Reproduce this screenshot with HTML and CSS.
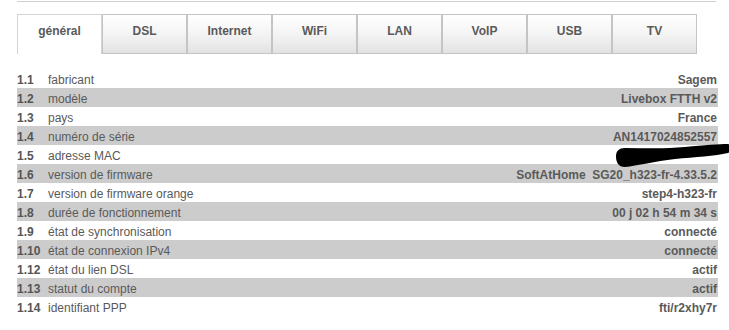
FILE: index.html
```html
<!DOCTYPE html>
<html lang="fr">
<head>
  <meta charset="UTF-8" />
  <title>Livebox - général</title>
  <link rel="stylesheet" href="styles.css">
</head>
<body>

<div class="page">
  <div class="top-line"></div>

  <!-- onglets -->
  <div class="tabs">
    <div class="tab active">général</div>
    <div class="tab">DSL</div>
    <div class="tab">Internet</div>
    <div class="tab">WiFi</div>
    <div class="tab">LAN</div>
    <div class="tab">VoIP</div>
    <div class="tab">USB</div>
    <div class="tab">TV</div>
  </div>

  <!-- infos -->
  <div class="info">
    <div class="row"><span class="num">1.1</span><span class="label">fabricant</span><span class="value">Sagem</span></div>
    <div class="row odd"><span class="num">1.2</span><span class="label">modèle</span><span class="value">Livebox FTTH v2</span></div>
    <div class="row"><span class="num">1.3</span><span class="label">pays</span><span class="value">France</span></div>
    <div class="row odd"><span class="num">1.4</span><span class="label">numéro de série</span><span class="value">AN1417024852557</span></div>
    <div class="row"><span class="num">1.5</span><span class="label">adresse MAC</span>
      <span class="value masked">
        <svg class="blot" width="117" height="24" viewBox="0 0 117 24">
          <path d="M1 12 C1 7, 4 4, 10 4 C30 4, 50 5, 70 3 C90 1, 104 0, 113 0 C117 1, 117 6, 113 9 C100 12, 80 13, 60 15 C40 17, 22 22, 10 23 C3 23, 1 18, 1 12 Z" fill="#000"/>
        </svg>
      </span>
    </div>
    <div class="row odd"><span class="num">1.6</span><span class="label">version de firmware</span><span class="value">SoftAtHome&nbsp; SG20_h323-fr-4.33.5.2</span></div>
    <div class="row"><span class="num">1.7</span><span class="label">version de firmware orange</span><span class="value">step4-h323-fr</span></div>
    <div class="row odd"><span class="num">1.8</span><span class="label">durée de fonctionnement</span><span class="value">00 j 02 h 54 m 34 s</span></div>
    <div class="row"><span class="num">1.9</span><span class="label">état de synchronisation</span><span class="value">connecté</span></div>
    <div class="row odd"><span class="num">1.10</span><span class="label">état de connexion IPv4</span><span class="value">connecté</span></div>
    <div class="row"><span class="num">1.12</span><span class="label">état du lien DSL</span><span class="value">actif</span></div>
    <div class="row odd"><span class="num">1.13</span><span class="label">statut du compte</span><span class="value">actif</span></div>
    <div class="row"><span class="num">1.14</span><span class="label">identifiant PPP</span><span class="value">fti/r2xhy7r</span></div>
  </div>
</div>

</body>
</html>
```

FILE: styles.css
```css
* {
  box-sizing: border-box;
}

html, body {
  margin: 0;
  padding: 0;
  background: #fff;
  font-family: 'Liberation Sans', Arial, sans-serif;
  font-size: 12px;
  color: #555;
  width: 729px;
  height: 330px;
  overflow: hidden;
}

.page {
  padding: 1px 0 0 17px;
  width: 718px;
}

.top-line {
  height: 1px;
  background: #d0d0d0;
  margin-right: 2px;
}

.tabs {
  display: flex;
  margin-top: 12px;
}

.tab {
  width: 85px;
  height: 40px;
  padding-top: 7px;
  line-height: 19px;
  text-align: center;
  font-weight: bold;
  color: #5a5a5a;
  border: 1px solid #c4c4c4;
  background: linear-gradient(to bottom, #ffffff 0%, #f4f4f4 50%, #e2e2e2 100%);
}

.tab.active {
  background: #fff;
  border-bottom: none;
  border-color: #d4d4d4;
}

.info {
  margin-top: 15px;
}

.row {
  display: flex;
  align-items: flex-start;
  height: 19px;
  padding-top: 3px;
  line-height: 16px;
}

.row.odd {
  background: #cccccc;
}

.num {
  width: 31px;
  font-weight: bold;
  color: #555;
  flex: none;
}

.label {
  flex: 1;
  color: #5a5a5a;
}

.value {
  font-weight: bold;
  color: #5a5a5a;
  padding-right: 1px;
  text-align: right;
}

.masked {
  position: relative;
  width: 100px;
  height: 16px;
}

.blot {
  position: absolute;
  display: block;
  width: 117px;
  height: 24px;
  left: -3px;
  top: -4px;
}
```
